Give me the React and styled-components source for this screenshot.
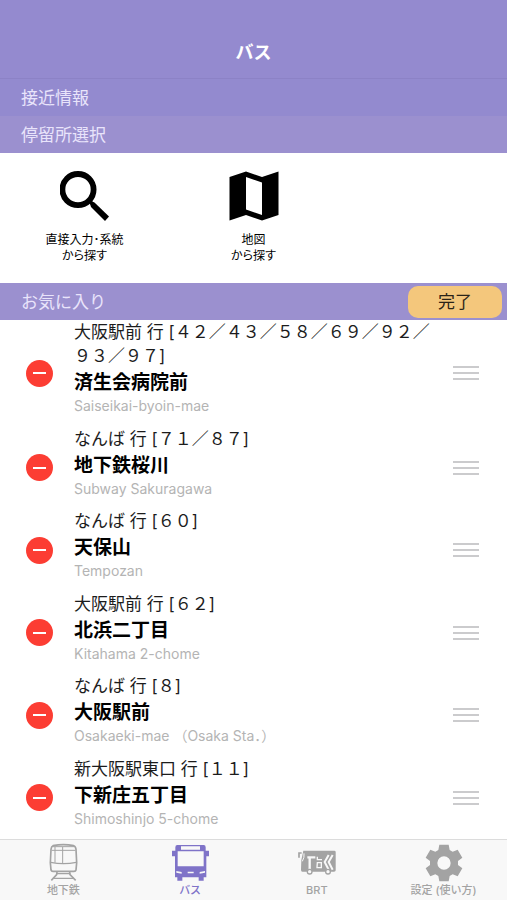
import React, { useState } from 'react';
import styled, { createGlobalStyle } from 'styled-components';

const FAVORITES = [
  {
    route: '大阪駅前 行 [４２／４３／５８／６９／９２／９３／９７]',
    name: '済生会病院前',
    roman: 'Saiseikai-byoin-mae',
  },
  { route: 'なんば 行 [７１／８７]', name: '地下鉄桜川', roman: 'Subway Sakuragawa' },
  { route: 'なんば 行 [６０]', name: '天保山', roman: 'Tempozan' },
  { route: '大阪駅前 行 [６２]', name: '北浜二丁目', roman: 'Kitahama 2-chome' },
  { route: 'なんば 行 [８]', name: '大阪駅前', roman: 'Osakaeki-mae （Osaka Sta．）' },
  { route: '新大阪駅東口 行 [１１]', name: '下新庄五丁目', roman: 'Shimoshinjo 5-chome' },
];

const SearchIcon = () => (
  <svg width="50" height="50" viewBox="0 0 50 50" aria-hidden="true">
    <circle cx="18" cy="18.6" r="15.6" fill="none" stroke="#000" strokeWidth="5.8" />
    <path d="M30.5 30 L34.5 31.5 L49 45.5 L45 50 L31 36 L29.5 31 Z" fill="#000" />
    <path d="M28.5 29 L34 34.5" stroke="#000" strokeWidth="3.4" />
  </svg>
);

const MapIcon = () => (
  <svg width="50" height="50" viewBox="0 0 50 50" aria-hidden="true">
    <path
      d="M0.5 6 L17 0.5 L33 6 L49.5 0.5 V44 L33 49.5 L17 44 L0.5 49.5 Z M17 6 V38.5 L33 44 V11.5 Z"
      fill="#000"
      fillRule="evenodd"
    />
  </svg>
);

const TrainIcon = () => (
  <svg width="40" height="40" viewBox="130 25 120 120" fill="none" stroke="currentColor" aria-hidden="true">
    <path
      d="M160 33 Q191 27 222 33 Q228 35 229 44 L231 84 L229 106 Q228 110 223 110 H160 Q155 110 154 106 L152 84 L154 44 Q155 35 160 33 Z"
      strokeWidth="5"
    />
    <path d="M156 47 H227" strokeWidth="3" />
    <path d="M166 37 V84 M189 37 V86" strokeWidth="3" />
    <path d="M153 83 Q191 91 230 83" strokeWidth="4" />
    <path d="M159 36 H223" strokeWidth="3" />
    <path d="M172 112 L171 120 L155 137 M210 112 L211 120 L228 137" strokeWidth="5" />
    <path d="M170 117 H212 M160 131 H222" strokeWidth="4" />
  </svg>
);

const BusIcon = () => (
  <svg width="40" height="40" viewBox="121 25 120 120" aria-hidden="true">
    <path
      fill="currentColor"
      fillRule="evenodd"
      d="M143 31 H222 Q228 31 228 38 V48 H238 V65 H230 V128 H222 V138 H207 V128 H158 V138 H143 V128 H136 V65 H127 V48 H137 V38 Q137 31 143 31 Z M154 35 V45 H211 V35 Z M144 50 V95 H222 V50 Z M140 109 V114 L156 117 V112 Z M226 109 L210 112 V117 L226 114 Z M174 111 V116 H192 V111 Z"
    />
  </svg>
);

const BrtIcon = () => (
  <svg width="40" height="40" viewBox="111 25 120 120" aria-hidden="true">
    <path d="M130 48 H223 Q227 48 227 52 V107 Q227 111 222 111 H127 Q123 111 123 105 L124 76 Z" fill="currentColor" />
    <path d="M117 69 V55 H125" fill="none" stroke="currentColor" strokeWidth="5" />
    <path d="M132 56 Q134 68 127 80" fill="none" stroke="#f8f8f8" strokeWidth="3" />
    <path d="M142 68 H166 M149 68 V103" fill="none" stroke="#f8f8f8" strokeWidth="7" />
    <path d="M172 66 V75 H186 M172 84 H184 V99 H171 Z" fill="none" stroke="#f8f8f8" strokeWidth="4" />
    <path d="M206 61 L194 82 L206 105 M218 61 L206 82 L218 105" fill="none" stroke="#f8f8f8" strokeWidth="6" />
    <circle cx="149" cy="111" r="7" fill="#f8f8f8" stroke="currentColor" strokeWidth="4" />
    <circle cx="204" cy="111" r="7" fill="#f8f8f8" stroke="currentColor" strokeWidth="4" />
  </svg>
);

const GearIcon = () => (
  <svg width="40" height="40" viewBox="131 25 120 120" aria-hidden="true">
    <path
      fill="currentColor"
      fillRule="evenodd"
      d="M177 30 H205 L208 46 L217 51 L232 45 L246 69 L233 79 V91 L246 101 L232 125 L217 119 L208 124 L205 140 H177 L174 124 L165 119 L150 125 L136 101 L149 91 V79 L136 69 L150 45 L165 51 L174 46 Z M191 65 A20 20 0 1 0 191 105 A20 20 0 1 0 191 65 Z"
    />
  </svg>
);

const TABS = [
  { label: '地下鉄', Icon: TrainIcon },
  { label: 'バス', Icon: BusIcon },
  { label: 'BRT', Icon: BrtIcon },
  { label: '設定 (使い方)', Icon: GearIcon },
];

const App = () => {
  const [tab, setTab] = useState('バス');
  const [favorites, setFavorites] = useState(FAVORITES);

  const remove = (name) => {
    setFavorites(favorites.filter((item) => item.name !== name));
  };

  return (
    <>
      <GlobalStyle />
      <Screen>
        <Header>
          <h1>バス</h1>
        </Header>
        <SectionBar $dark>
          <h2>接近情報</h2>
        </SectionBar>
        <SectionBar>
          <h2>停留所選択</h2>
        </SectionBar>
        <SearchGrid>
          <SearchButton type="button">
            <SearchIcon />
            <span>直接入力･系統<br />から探す</span>
          </SearchButton>
          <SearchButton type="button">
            <MapIcon />
            <span>地図<br />から探す</span>
          </SearchButton>
        </SearchGrid>
        <SectionBar>
          <h2>お気に入り</h2>
          <DoneButton type="button">完了</DoneButton>
        </SectionBar>
        <FavoriteList>
          {
            favorites.map(({ route, name, roman }) => (
              <FavoriteRow key={ name }>
                <DeleteButton
                  type="button"
                  aria-label="削除"
                  onClick={ () => remove(name) }
                />
                <Stop>
                  <Route>{ route }</Route>
                  <StopName>{ name }</StopName>
                  <Roman>{ roman }</Roman>
                </Stop>
                <DragHandle type="button" aria-label="並べ替え">
                  <span />
                  <span />
                  <span />
                </DragHandle>
              </FavoriteRow>
            ))
          }
        </FavoriteList>
        <TabBar>
          {
            TABS.map(({ label, Icon }) => (
              <Tab
                key={ label }
                type="button"
                $active={ tab === label }
                onClick={ () => setTab(label) }
              >
                <Icon />
                <span>{ label }</span>
              </Tab>
            ))
          }
        </TabBar>
      </Screen>
    </>
  );
};

export default App;

const GlobalStyle = createGlobalStyle`
  * {
    box-sizing: border-box;
  }

  body {
    margin: 0;
    background: #ffffff;
    color: #000000;
    font-family: Inter, "Noto Sans CJK JP", sans-serif;
  }

  h1, h2, h3, p, ul {
    margin: 0;
    padding: 0;
  }

  button {
    border: 0;
    padding: 0;
    background: none;
    color: inherit;
    font-family: inherit;
    cursor: pointer;
  }
`;

const Screen = styled.div`
  display: flex;
  flex-direction: column;
  min-height: 100vh;
`;

const Header = styled.header`
  padding: 41px 0 13px;
  background: #948acf;
  border-bottom: 1px solid #8c82c6;
  text-align: center;

  h1 {
    color: #ffffff;
    font-size: 18px;
    font-weight: 700;
    line-height: 24px;
  }
`;

const SectionBar = styled.div`
  display: flex;
  align-items: center;
  justify-content: space-between;
  height: 37px;
  padding: 0 5px 0 21px;
  background: ${ ({ $dark }) => ($dark ? '#938acf' : '#9b90cf') };

  h2 {
    color: #e9e4fb;
    font-size: 17px;
    font-weight: 400;
    line-height: 24px;
  }
`;

const SearchGrid = styled.div`
  display: grid;
  grid-template-columns: repeat(3, 1fr);
  padding: 18px 0 19px;
`;

const SearchButton = styled.button`
  display: flex;
  flex-direction: column;
  align-items: center;
  gap: 11px;

  span {
    font-size: 12px;
    line-height: 16px;
    font-feature-settings: "palt";
  }
`;

const DoneButton = styled.button`
  width: 94px;
  height: 32px;
  border-radius: 10px;
  background: #f4c77c;
  color: #2b2418;
  font-size: 17px;
  line-height: 24px;
`;

const FavoriteList = styled.ul`
  display: flex;
  flex-direction: column;
  flex: 1;
  list-style: none;
`;

const FavoriteRow = styled.li`
  display: flex;
  flex: 1 0 auto;
  align-items: center;
  padding: 0 28px 0 26px;
`;

const DeleteButton = styled.button`
  display: flex;
  flex: none;
  align-items: center;
  justify-content: center;
  width: 27px;
  height: 27px;
  border-radius: 50%;
  background: #fc3d33;

  &::before {
    content: '';
    width: 13px;
    height: 2px;
    background: #ffffff;
  }
`;

const Stop = styled.div`
  flex: 1;
  align-self: flex-start;
  min-width: 0;
  padding: 0 12px 10px 21px;
`;

const Route = styled.p`
  color: #1c1c1c;
  font-size: 17px;
  line-height: 24px;
  word-break: break-all;
`;

const StopName = styled.h3`
  font-size: 19px;
  font-weight: 700;
  line-height: 29px;
`;

const Roman = styled.p`
  color: #b4b4b4;
  font-size: 14px;
  line-height: 18px;
`;

const DragHandle = styled.button`
  display: flex;
  flex: none;
  flex-direction: column;
  gap: 4px;
  width: 26px;

  span {
    height: 2px;
    background: #cbcbcd;
  }
`;

const TabBar = styled.nav`
  position: sticky;
  bottom: 0;
  display: grid;
  grid-template-columns: repeat(4, 1fr);
  padding: 3px 0;
  border-top: 1px solid #dcdcdc;
  background: #f8f8f8;
`;

const Tab = styled.button`
  display: flex;
  flex-direction: column;
  align-items: center;
  color: ${ ({ $active }) => ($active ? '#7f73c8' : '#a3a3a3') };

  span {
    font-size: 11px;
    font-weight: 500;
    line-height: 14px;
  }
`;
